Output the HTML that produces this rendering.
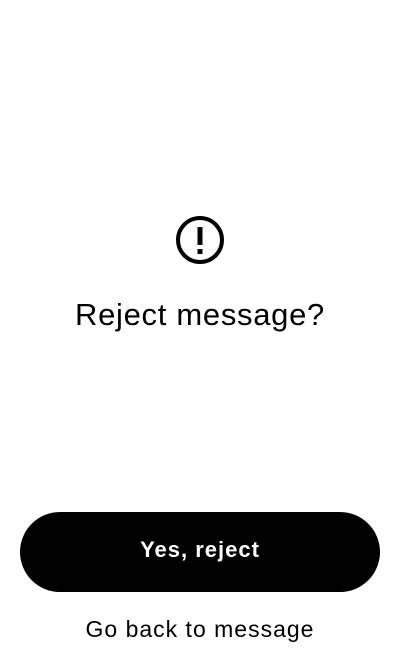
<!DOCTYPE html>
<html><head><style>
body{margin:0;width:400px;height:672px;background:#fff;font-family:"Liberation Sans",sans-serif;position:relative;overflow:hidden}
.t{position:absolute;left:0;width:400px;text-align:center;color:#000;white-space:nowrap}
</style></head><body>
<svg style="position:absolute;left:174px;top:214px" width="52" height="52" viewBox="0 0 52 52">
<circle cx="26" cy="26" r="22" fill="none" stroke="#000" stroke-width="4"/>
<rect x="23.5" y="13" width="5" height="18" fill="#000"/>
<rect x="23.5" y="35" width="5" height="5" fill="#000"/>
</svg>
<div class="t" style="top:297px;font-size:31px;letter-spacing:0.7px">Reject message?</div>
<div style="position:absolute;left:20px;top:512px;width:360px;height:80px;border-radius:40px;background:#000"></div>
<div class="t" style="top:537px;font-size:22px;color:#fff;font-weight:bold;letter-spacing:1px">Yes, reject</div>
<div class="t" style="top:616px;font-size:23px;letter-spacing:1px">Go back to message</div>
</body></html>
